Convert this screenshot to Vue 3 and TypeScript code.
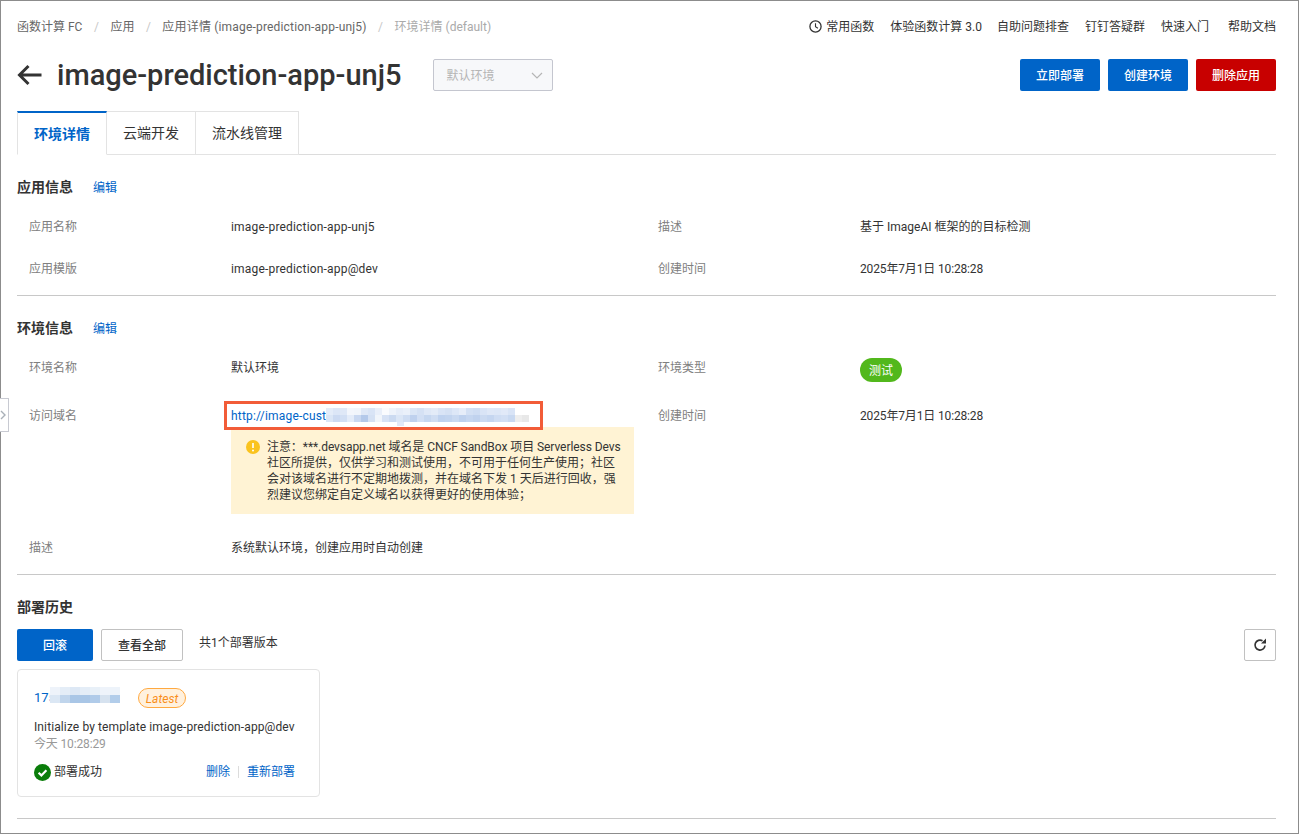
<script setup lang="ts">
/** Types */
interface InfoRow {
    label: string,
    value: string,
    kind?: string
}

/** Data */
const breadcrumbs: string[] = ['函数计算 FC', '应用', '应用详情 (image-prediction-app-unj5)'];
const topLinks: string[] = ['体验函数计算 3.0', '自助问题排查', '钉钉答疑群', '快速入门', '帮助文档'];
const tabs: string[] = ['环境详情', '云端开发', '流水线管理'];

const appRows: InfoRow[] = [
    { label: '应用名称', value: 'image-prediction-app-unj5', kind: 'latin' },
    { label: '描述', value: '基于 ImageAI 框架的的目标检测' },
    { label: '应用模版', value: 'image-prediction-app@dev', kind: 'latin' },
    { label: '创建时间', value: '2025年7月1日 10:28:28', kind: 'date' }
];

/** Blurred pixels, two rows of shades */
const urlMosaic: string[] = [
    '#e4ecf9', '#dce6f7', '#dfe8f7', '#f3f6fc', '#f1f5fb', '#dfe8f7', '#d9e4f6', '#e9effa', '#fafbfe', '#eef3fb',
    '#e6edf9', '#eaf0fa', '#dbe6f6', '#d5e1f4', '#dfe8f7', '#e3ebf8', '#d9e4f6', '#d5e1f4', '#dde7f7', '#e6edf9',
    '#d3e0f4', '#cfddf3', '#d9e4f6', '#dfe8f7', '#dde7f7', '#e1e9f8', '#d9e4f6', '#ffffff', '#ffffff',
    '#dbe6f6', '#ccdaf2', '#d2dff4', '#e4ecf9', '#c9d8f1', '#b4c9ea', '#d5e1f4', '#f1f5fb', '#d7e2f5', '#cbdaf1',
    '#dbe6f6', '#cfddf3', '#bfd1ee', '#d2dff4', '#c6d7f0', '#cfddf3', '#bfd2ef', '#c2d4ef', '#c9d9f1', '#bed1ee',
    '#c5d6f0', '#c0d2ee', '#cbdaf1', '#c5d6f0', '#cfddf3', '#d2dff4', '#c9d9f1', '#eeeeee', '#e8e8e8'
];
const idMosaic: string[] = [
    '#eef3fa', '#e4edf7', '#dde8f5', '#e4edf7', '#e8f0f8', '#eef3fa', '#edf3fa',
    '#dbe7f4', '#c0d5ec', '#a9c6e6', '#a9c6e6', '#b0cbe9', '#d6e2ef', '#b2cdea'
];
</script>

<template>
    <div class="page">
        <div class="side-handle">
            <svg width="6" height="10" viewBox="0 0 6 10"><path d="M1 1l4 4-4 4" fill="none" stroke="#a9b0b8" stroke-width="1.4" /></svg>
        </div>

        <header class="topbar">
            <nav class="crumbs">
                <template v-for="(item, index) in breadcrumbs" :key="item">
                    <span class="crumb" :class="{ latin: index === 2 }">{{ item }}</span>
                    <span class="crumb-sep">/</span>
                </template>
                <span class="crumb crumb-last">环境详情 (default)</span>
            </nav>
            <div class="top-links">
                <span class="top-link top-link-icon">
                    <svg width="13" height="13" viewBox="0 0 13 13"><circle cx="6.5" cy="6.500" r="5.600" fill="none" stroke="#333" stroke-width="1.300" /><path d="M6.500 3.200v3.500l2.400 1.500" fill="none" stroke="#333" stroke-width="1.100" /></svg>
                    常用函数
                </span>
                <span v-for="link in topLinks" :key="link" class="top-link">{{ link }}</span>
            </div>
        </header>

        <div class="title-row">
            <svg class="back" width="25" height="22" viewBox="0 0 25 22"><path d="M24.500 11H3M11.500 2L2.500 11l9 9" fill="none" stroke="#333" stroke-width="3" /></svg>
            <h1 class="title">image-prediction-app-unj5</h1>
            <div class="env-select">
                <span>默认环境</span>
                <svg width="12" height="7" viewBox="0 0 12 7"><path d="M1 1l5 5 5-5" fill="none" stroke="#b5b5b5" stroke-width="1.200" /></svg>
            </div>
            <div class="actions">
                <button class="btn btn-primary btn-action">立即部署</button>
                <button class="btn btn-primary btn-action">创建环境</button>
                <button class="btn btn-danger btn-action">删除应用</button>
            </div>
        </div>

        <div class="tabs">
            <div v-for="(tab, index) in tabs" :key="tab" class="tab" :class="{ active: index === 0 }">{{ tab }}</div>
        </div>

        <section class="section">
            <div class="section-head">
                <span class="section-title">应用信息</span>
                <a class="link head-link">编辑</a>
            </div>
            <div class="info-grid">
                <template v-for="row in appRows" :key="row.label">
                    <div class="cell label">{{ row.label }}</div>
                    <div class="cell" :class="row.kind">{{ row.value }}</div>
                </template>
            </div>
        </section>

        <section class="section">
            <div class="section-head">
                <span class="section-title">环境信息</span>
                <a class="link head-link">编辑</a>
            </div>
            <div class="info-grid">
                <div class="cell label">环境名称</div>
                <div class="cell">默认环境</div>
                <div class="cell label">环境类型</div>
                <div class="cell tag-cell"><span class="env-tag">测试</span></div>

                <div class="cell label">访问域名</div>
                <div class="cell url-cell">
                    <div class="url-line">
                        <a class="link url latin">http://image-custe</a>
                        <span class="mosaic url-mosaic">
                            <i v-for="(shade, index) in urlMosaic" :key="index" :style="{ backgroundColor: shade }"></i>
                        </span>
                        <span class="highlight"></span>
                    </div>
                    <div class="notice">
                        <svg class="notice-icon" width="14" height="14" viewBox="0 0 14 14"><circle cx="7" cy="7" r="7" fill="#fac31e" /><path d="M7 3v5" stroke="#fff" stroke-width="1.600" /><circle cx="7" cy="10.400" r="1" fill="#fff" /></svg>
                        <p class="notice-text"><span class="tight">注意：***.devsapp.net 域名是 CNCF SandBox 项目 Serverless Devs</span><br>社区所提供，仅供学习和测试使用，不可用于任何生产使用；社区<br>会对该域名进行不定期地拨测，并在域名下发 1 天后进行回收，强<br>烈建议您绑定自定义域名以获得更好的使用体验；</p>
                    </div>
                </div>
                <div class="cell label">创建时间</div>
                <div class="cell date">2025年7月1日 10:28:28</div>

                <div class="cell label">描述</div>
                <div class="cell">系统默认环境，创建应用时自动创建</div>
            </div>
        </section>

        <section class="section history">
            <div class="section-head">
                <span class="section-title">部署历史</span>
            </div>
            <div class="toolbar">
                <button class="btn btn-primary btn-rollback">回滚</button>
                <button class="btn btn-default btn-all">查看全部</button>
                <span class="count">共1个部署版本</span>
                <button class="btn btn-default btn-refresh">
                    <svg width="14" height="14" viewBox="0 0 14 14"><path d="M12 7.500A5 5 0 1 1 9.500 2.700" fill="none" stroke="#333" stroke-width="1.700" /><path d="M8 5.600h5V.6z" fill="#333" /></svg>
                </button>
            </div>
            <div class="card">
                <div class="card-head">
                    <a class="link card-id">175</a>
                    <span class="mosaic id-mosaic">
                        <i v-for="(shade, index) in idMosaic" :key="index" :style="{ backgroundColor: shade }"></i>
                    </span>
                    <span class="latest">Latest</span>
                </div>
                <div class="card-desc">Initialize by template image-prediction-app@dev</div>
                <div class="card-time date">今天 10:28:29</div>
                <div class="card-foot">
                    <svg width="17" height="17" viewBox="0 0 17 17"><circle cx="8.500" cy="8.500" r="8.500" fill="#0a7d0a" /><path d="M4.600 8.700l2.800 2.700 5-5.100" fill="none" stroke="#fff" stroke-width="2.200" /></svg>
                    <span class="status">部署成功</span>
                    <a class="link card-action">删除</a>
                    <span class="card-sep"></span>
                    <a class="link card-action">重新部署</a>
                </div>
            </div>
        </section>
    </div>
</template>

<style scoped>
.page {
    position: relative;
    box-sizing: border-box;
    height: 834px;
    padding: 0 22px 0 16px;
    border: 1px solid #8c8c8c;
    background: #fff;
    color: #333;
    font-family: Roboto, "Noto Sans CJK SC", sans-serif;
    font-size: 12px;
    line-height: 18px;
}

.latin {
    letter-spacing: 0.18px;
}

.date {
    letter-spacing: -0.15px;
}

.side-handle {
    position: absolute;
    left: -1px;
    top: 397px;
    display: flex;
    align-items: center;
    box-sizing: border-box;
    width: 9px;
    height: 34px;
    border: 1px solid #c8cad2;
    border-left: 0;
    background: #fff;
}

/* Top bar */
.topbar {
    display: flex;
    align-items: center;
    justify-content: space-between;
    box-sizing: border-box;
    height: 50px;
    padding-top: 1px;
}

.crumbs {
    display: flex;
    align-items: center;
    color: #666;
}

.crumb-sep {
    margin: 0 11.5px;
    color: #c8c8c8;
}

.crumb-last {
    color: #aaa;
}

.top-links {
    display: flex;
    gap: 16px;
}

.top-link:nth-child(2) {
    margin-right: -1px;
}

.top-link:last-child {
    margin-left: 3px;
}

.top-link-icon {
    display: flex;
    align-items: center;
    gap: 4px;
}

/* Title */
.title-row {
    display: flex;
    align-items: center;
    height: 32px;
    margin-top: 8px;
}

.back {
    margin-right: 15px;
}

.title {
    margin: 0 32px 0 0;
    font-size: 29px;
    font-weight: 500;
    line-height: 32px;
}

.env-select {
    display: flex;
    align-items: center;
    justify-content: space-between;
    box-sizing: border-box;
    width: 120px;
    height: 32px;
    padding: 1px 9px 0 12px;
    border: 1px solid #c4c6cf;
    border-radius: 2px;
    background: #f7f8fa;
    color: #b5b5b5;
}

.actions {
    display: flex;
    gap: 8px;
    margin-left: auto;
}

.btn {
    box-sizing: border-box;
    height: 32px;
    padding: 2px 0 0;
    border: 1px solid transparent;
    border-radius: 2px;
    font: inherit;
    font-weight: 500;
}

.btn-primary {
    background: #0064c8;
    color: #fff;
}

.btn-danger {
    background: #c80000;
    color: #fff;
}

.btn-default {
    border-color: #c1c1c1;
    background: #fff;
    color: #333;
}

.btn-action {
    width: 80px;
}

/* Tabs */
.tabs {
    display: flex;
    box-sizing: border-box;
    height: 44px;
    margin-top: 20px;
    border-bottom: 1px solid #dcdcdc;
}

.tab {
    box-sizing: border-box;
    height: 44px;
    padding: 0 16px;
    border: 1px solid #e3e3e3;
    border-left: 0;
    font-size: 14px;
    line-height: 42px;
}

.tab.active {
    width: 90px;
    border-top: 2px solid #0064c8;
    border-left: 1px solid #e3e3e3;
    border-bottom-color: #fff;
    color: #0064c8;
    font-weight: 700;
}

/* Sections */
.section {
    padding-bottom: 6px;
    border-bottom: 1px solid #c8c8c8;
}

.section-head {
    display: flex;
    align-items: center;
    gap: 20px;
    height: 20px;
    margin: 22px 0 8px;
}

.section-title {
    font-size: 14px;
    font-weight: 700;
}

.link {
    color: #0064c8;
}

.head-link {
    padding-top: 2px;
}

.info-grid {
    display: grid;
    grid-template-columns: 202px 427px 202px 1fr;
    padding-left: 12px;
}

.cell {
    padding: 13px 0 11px;
    min-height: 18px;
}

.tag-cell {
    padding: 12px 0;
}

.env-tag {
    display: block;
    box-sizing: border-box;
    width: 42px;
    height: 24px;
    padding-top: 1px;
    border-radius: 12px;
    background: #52b81c;
    color: #fff;
    line-height: 24px;
    text-align: center;
}

.label {
    color: #808080;
}

.url-line {
    position: relative;
    display: flex;
    align-items: center;
    height: 18px;
}

.url {
    white-space: nowrap;
}

.mosaic {
    display: grid;
}

.mosaic i {
    display: block;
}

.url-mosaic {
    position: absolute;
    left: 95px;
    top: 1px;
    grid-template-columns: repeat(29, 7px);
    grid-auto-rows: 7px;
}

.url-mosaic::after {
    content: "";
    position: absolute;
    left: 71px;
    top: 14px;
    width: 7px;
    height: 4px;
    background: #e1e9f8;
}

.highlight {
    position: absolute;
    left: -7px;
    top: -6px;
    box-sizing: border-box;
    width: 319px;
    height: 29px;
    border: 3px solid #f25c38;
}

.url-cell {
    padding-bottom: 12px;
}

.notice {
    display: flex;
    gap: 7px;
    box-sizing: border-box;
    width: 403px;
    height: 87px;
    margin-top: 2px;
    padding: 12px 0 0 15px;
    background: #fff3d4;
}

.notice-icon {
    flex: none;
    margin-top: 1px;
}

.notice-text {
    margin: 0;
    line-height: 16px;
    white-space: nowrap;
}

.tight {
    letter-spacing: -0.07px;
}

/* Deploy history */
.history {
    padding-bottom: 21px;
}

.toolbar {
    display: flex;
    align-items: center;
    margin-top: 12px;
}

.btn-rollback {
    width: 76px;
}

.btn-all {
    width: 82px;
    margin-left: 8px;
}

.count {
    margin: -4px 0 0 16px;
}

.btn-refresh {
    display: flex;
    align-items: center;
    justify-content: center;
    width: 32px;
    padding: 0;
    margin-left: auto;
}

.card {
    box-sizing: border-box;
    width: 303px;
    height: 128px;
    margin-top: 8px;
    padding: 18px 16px 0;
    border: 1px solid #e3e3e3;
    border-radius: 4px;
}

.card-head {
    display: flex;
    align-items: flex-start;
    height: 20px;
}

.card-id {
    flex: none;
    width: 23px;
    padding-top: 1px;
    font-size: 13px;
    white-space: nowrap;
}

.id-mosaic {
    position: relative;
    flex: none;
    grid-template-columns: repeat(7, 10px);
    grid-auto-rows: 8px;
    margin: -1px 0 0 -7px;
}

.latest {
    box-sizing: border-box;
    width: 48px;
    height: 20px;
    margin-left: 18px;
    border: 1px solid #ffa940;
    border-radius: 10px;
    background: #fff1de;
    color: #f98e1a;
    font-style: italic;
    line-height: 20px;
    text-align: center;
}

.card-desc {
    margin-top: 10px;
    letter-spacing: 0.11px;
}

.card-time {
    margin-top: -1px;
    color: #999;
}

.card-foot {
    display: flex;
    align-items: center;
    margin-top: 10px;
    padding-right: 8px;
}

.status {
    margin-left: 3px;
}

.card-action:first-of-type {
    margin-left: auto;
}

.card-sep {
    width: 1px;
    height: 12px;
    margin: 0 8px;
    background: #dcdcdc;
}
</style>

<style>
html,
body {
    margin: 0;
    background: #fff;
}
</style>
